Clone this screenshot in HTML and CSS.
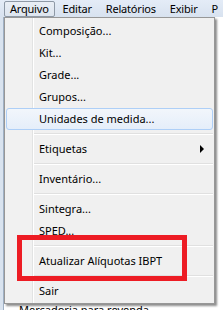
FILE: index.html
```html
<!DOCTYPE html>
<html lang="pt-BR">

<head>
    <meta charset="UTF-8">
    <meta name="viewport" content="width=device-width, initial-scale=1.0">
    <title>Arquivo</title>
    <link rel="stylesheet" href="styles.css">
</head>

<body>
    <div class="window">
        <ul class="menubar">
            <li class="open">Arquivo</li>
            <li>Editar</li>
            <li>Relatórios</li>
            <li>Exibir</li>
            <li>P</li>
        </ul>
        <div class="content">
            <div class="frame"></div>
            <div class="form">
                <p class="row">Mercadoria para revenda</p>
            </div>
        </div>

        <!-- menu aberto -->
        <ul class="dropdown">
            <li>Composição...</li>
            <li>Kit...</li>
            <li>Grade...</li>
            <li>Grupos...</li>
            <li class="hover">Unidades de medida...</li>
            <li class="sep"></li>
            <li class="sub">Etiquetas</li>
            <li class="sep"></li>
            <li>Inventário...</li>
            <li class="sep"></li>
            <li>Sintegra...</li>
            <li>SPED...</li>
            <li class="sep"></li>
            <li>Atualizar Alíquotas IBPT</li>
            <li class="sep"></li>
            <li>Sair</li>
        </ul>
        <div class="mark"></div>
    </div>
</body>

</html>
```

FILE: styles.css
```css
* {
    margin: 0;
    padding: 0;
    box-sizing: border-box;
}

li {
    list-style: none;
}

body {
    width: 223px;
    height: 310px;
    overflow: hidden;
    font-family: "Noto Sans", "Open Sans", sans-serif;
    font-size: 11px;
    color: #000;
    background-color: #f0f0f0;
}

.window {
    position: relative;
    width: 223px;
    height: 310px;
    display: flex;
    flex-direction: column;
}

.menubar {
    height: 17px;
    display: flex;
    align-items: center;
    padding-left: 4px;
    overflow: hidden;
    background: linear-gradient(#e4ecf7, #d8e2ef);
}

.menubar li {
    height: 16px;
    line-height: 14px;
    padding: 0 6px;
    border: 1px solid transparent;
    white-space: nowrap;
    letter-spacing: -0.2px;
}

.menubar li.open {
    padding: 0 5px;
    margin-right: 1px;
    border-color: #8e99a6;
    border-radius: 2px;
    background: linear-gradient(#e9eef5, #dde5ef);
}

.content {
    flex: 1;
    display: flex;
}

.content .frame {
    width: 4px;
    background-color: #d9e3ef;
    border-right: 1px solid #9fb0c4;
}

.content .form {
    flex: 1;
    display: flex;
    flex-direction: column;
    justify-content: flex-end;
    background-color: #fff;
    padding: 0 0 0 15px;
}

.content .row {
    height: 9px;
    line-height: 17px;
    overflow: hidden;
    white-space: nowrap;
}

.dropdown {
    position: absolute;
    top: 17px;
    left: 4px;
    width: 211px;
    padding: 2px 1px 1px;
    border: 1px solid #979797;
    background: linear-gradient(to right, #f1f1f1 27px, #e2e3e3 27px, #e2e3e3 28px, #fff 28px, #fff 29px, #f0f0f0 29px);
    box-shadow: 2px 2px 2px rgba(0, 0, 0, .45);
}

.dropdown li {
    position: relative;
    height: 22px;
    line-height: 20px;
    padding-left: 32px;
    border: 1px solid transparent;
    border-radius: 3px;
    white-space: nowrap;
}

.dropdown li.hover {
    border-color: #aecff7;
    background: linear-gradient(#f2f6fb, #e5eefa);
}

.dropdown li.sep {
    height: 8px;
    padding: 0;
    border: 0;
    border-radius: 0;
    margin-left: 28px;
    background: linear-gradient(transparent 3px, #e0e0e0 3px, #e0e0e0 4px, #fff 4px, #fff 5px, transparent 5px);
}

.dropdown li.sub::after {
    content: "";
    position: absolute;
    right: 8px;
    top: 6px;
    border-left: 4px solid #000;
    border-top: 4px solid transparent;
    border-bottom: 4px solid transparent;
}

.mark {
    position: absolute;
    left: 17px;
    top: 235px;
    width: 170px;
    height: 46px;
    border: 5px solid #ed1c24;
}
```
